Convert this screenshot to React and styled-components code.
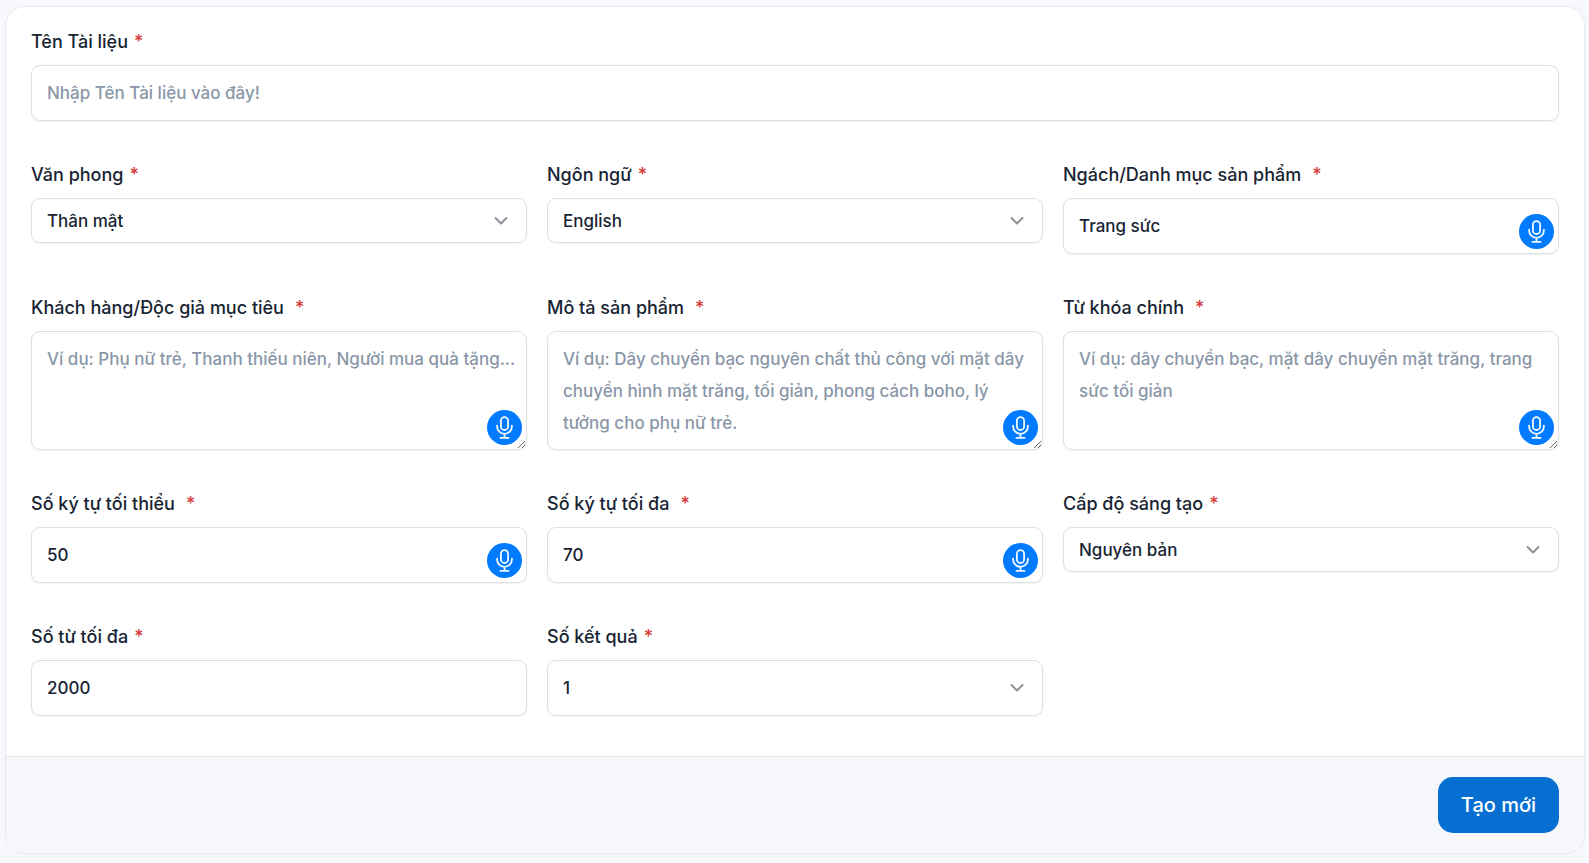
import React, { useId } from 'react';
import styled, { createGlobalStyle, css } from 'styled-components';

const GlobalStyle = createGlobalStyle`
  *, *::before, *::after { box-sizing: border-box; }
  body {
    margin: 0;
    background: #f6f8fb;
    color: #182433;
    font-family: Inter, "Noto Sans", sans-serif;
    font-size: 17px;
    font-weight: 500;
  }
`;

const Card = styled.form`
  margin: 6px 4px 9px 5px;
  border: 1px solid #e6e9ee;
  border-radius: 20px;
  background: #fff;
  overflow: hidden;
`;

const CardBody = styled.div`
  display: grid;
  grid-template-columns: repeat(3, minmax(0, 1fr));
  gap: 40px 20px;
  align-items: start;
  padding: 21px 25px 40px;
`;

const CardFooter = styled.footer`
  display: flex;
  justify-content: flex-end;
  padding: 20px 25px;
  border-top: 1px solid #e1e5ea;
  background: #f6f8fb;
`;

const Field = styled.div`
  grid-column: ${(p) => (p.$wide ? '1 / -1' : 'auto')};
`;

const Label = styled.label`
  display: block;
  margin-bottom: 10px;
  font-size: 18px;
  line-height: 27px;
`;

const Required = styled.span`
  margin-left: ${(p) => (p.$spaced ? '11px' : '6px')};
  color: #d63939;
`;

const Control = styled.div`
  position: relative;
  display: flex;
`;

const controlStyles = css`
  display: block;
  width: 100%;
  margin: 0;
  border: 1px solid #dcdfe4;
  border-radius: 9px;
  background: #fff;
  box-shadow: 0 1px 2px rgba(24, 36, 51, 0.06);
  color: inherit;
  font: inherit;

  &::placeholder {
    color: #8a97a8;
    opacity: 1;
  }

  &:focus {
    outline: none;
    border-color: #83b7e8;
  }
`;

const Input = styled.input`
  ${controlStyles}
  height: 56px;
  padding: 0 15px;
`;

const Select = styled.select`
  ${controlStyles}
  appearance: none;
  height: ${(p) => (p.$tall ? '56px' : '45px')};
  padding: 0 48px 0 15px;
`;

const Textarea = styled.textarea`
  ${controlStyles}
  height: 119px;
  padding: 11px 6px 11px 15px;
  line-height: 32px;
  resize: vertical;
  overflow: hidden;
`;

const Chevron = styled.svg`
  position: absolute;
  top: 50%;
  right: 18px;
  width: 16px;
  height: 16px;
  margin-top: -8px;
  fill: none;
  stroke: #8b9096;
  stroke-width: 2;
  stroke-linecap: round;
  stroke-linejoin: round;
  pointer-events: none;
`;

const MicButton = styled.button`
  position: absolute;
  right: 5px;
  bottom: 5px;
  width: 35px;
  height: 35px;
  padding: 0;
  border: 0;
  border-radius: 50%;
  background: #007bff;
  cursor: pointer;

  svg {
    display: block;
    fill: none;
    stroke: #f2f8ff;
    stroke-width: 1.8;
    stroke-linecap: round;
  }
`;

const SubmitButton = styled.button`
  height: 56px;
  padding: 0 23px;
  border: 0;
  border-radius: 15px;
  background: #066fd1;
  color: #fff;
  font: inherit;
  font-size: 20px;
  cursor: pointer;
`;

function Mic() {
  return (
    <MicButton type="button" aria-label="Nhập bằng giọng nói">
      <svg width="35" height="35" viewBox="0 0 35 35" aria-hidden="true">
        <rect x="13.9" y="7.2" width="7.2" height="12.8" rx="3.6" />
        <path d="M10.1 15.6v.8a7.4 7.4 0 0 0 14.8 0v-.8M17.5 23.8v4M13.4 27.8h8.2" />
      </svg>
    </MicButton>
  );
}

function FormField({ label, kind = 'input', mic, wide, tall, options, ...rest }) {
  const id = useId();
  return (
    <Field $wide={wide}>
      <Label htmlFor={id}>
        {label}
        <Required $spaced={mic}>*</Required>
      </Label>
      <Control>
        {kind === 'input' && <Input id={id} type="text" {...rest} />}
        {kind === 'textarea' && <Textarea id={id} {...rest} />}
        {kind === 'select' && (
          <>
            <Select id={id} $tall={tall} {...rest}>
              {options.map((option) => (
                <option key={option}>{option}</option>
              ))}
            </Select>
            <Chevron viewBox="0 0 16 16" aria-hidden="true">
              <path d="M2.5 5l5.5 5.5L13.5 5" />
            </Chevron>
          </>
        )}
        {mic && <Mic />}
      </Control>
    </Field>
  );
}

export default function App() {
  return (
    <>
      <GlobalStyle />
      <Card onSubmit={(event) => event.preventDefault()}>
        <CardBody>
          <FormField wide label="Tên Tài liệu" placeholder="Nhập Tên Tài liệu vào đây!" />

          <FormField kind="select" label="Văn phong" options={['Thân mật']} />
          <FormField kind="select" label="Ngôn ngữ" options={['English']} />
          <FormField mic label="Ngách/Danh mục sản phẩm" defaultValue="Trang sức" />

          <FormField
            kind="textarea"
            mic
            label="Khách hàng/Độc giả mục tiêu"
            placeholder="Ví dụ: Phụ nữ trẻ, Thanh thiếu niên, Người mua quà tặng..."
          />
          <FormField
            kind="textarea"
            mic
            label="Mô tả sản phẩm"
            placeholder="Ví dụ: Dây chuyền bạc nguyên chất thủ công với mặt dây chuyền hình mặt trăng, tối giản, phong cách boho, lý tưởng cho phụ nữ trẻ."
          />
          <FormField
            kind="textarea"
            mic
            label="Từ khóa chính"
            placeholder="Ví dụ: dây chuyền bạc, mặt dây chuyền mặt trăng, trang sức tối giản"
          />

          <FormField mic label="Số ký tự tối thiểu" defaultValue="50" />
          <FormField mic label="Số ký tự tối đa" defaultValue="70" />
          <FormField kind="select" label="Cấp độ sáng tạo" options={['Nguyên bản']} />

          <FormField label="Số từ tối đa" defaultValue="2000" />
          <FormField kind="select" tall label="Số kết quả" options={['1']} />
        </CardBody>
        <CardFooter>
          <SubmitButton type="submit">Tạo mới</SubmitButton>
        </CardFooter>
      </Card>
    </>
  );
}
